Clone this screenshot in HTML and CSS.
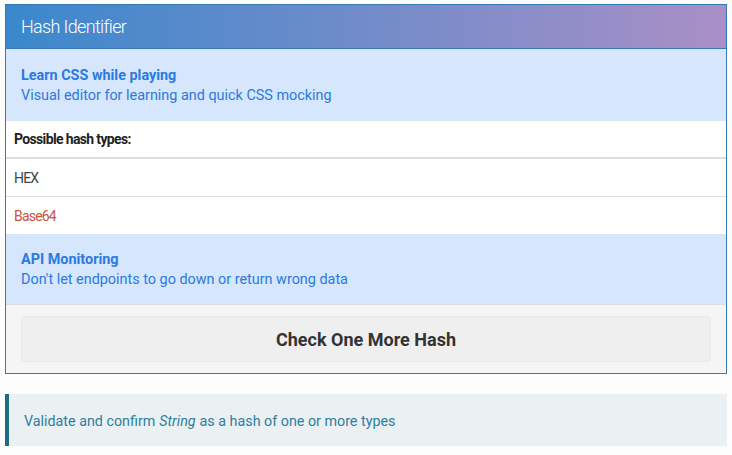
FILE: index.html
```html
<!DOCTYPE html>
<html lang="en">
<head>
<meta charset="utf-8">
<title>Hash Identifier</title>
<link rel="stylesheet" href="styles.css">
</head>
<body>
<div class="panel">
  <div class="panel-heading">Hash Identifier</div>
  <a class="promo" href="#">
    <span class="promo-title">Learn CSS while playing</span>
    <span class="promo-text">Visual editor for learning and quick CSS mocking</span>
  </a>
  <div class="list">
    <div class="list-head">Possible hash types:</div>
    <div class="list-row">HEX</div>
    <div class="list-row list-row-match">Base64</div>
  </div>
  <a class="promo promo-bottom" href="#">
    <span class="promo-title">API Monitoring</span>
    <span class="promo-text">Don't let endpoints to go down or return wrong data</span>
  </a>
  <div class="panel-footer">
    <button class="btn-check" type="button">Check One More Hash</button>
  </div>
</div>
<div class="callout">Validate and confirm <em>String</em> as a hash of one or more types</div>
</body>
</html>
```

FILE: styles.css
```css
html, body {
  margin: 0;
  padding: 0;
  background: #fdfdfd;
}
body {
  padding: 4px 5px 0 5px;
  font-family: Roboto, "Liberation Sans", sans-serif;
  font-size: 14px;
  color: #333;
}
.panel {
  border: 1px solid #337ab7;
  background: #fff;
}
.panel-heading {
  height: 44px;
  box-sizing: border-box;
  padding: 0 15px 1px;
  display: flex;
  align-items: center;
  background: linear-gradient(to right, #3a88cd, #aa8fc6);
  border-bottom: 1px solid #337ab7;
  color: #fff;
  font-size: 18px;
  font-weight: 300;
  letter-spacing: -0.65px;
}
.promo {
  display: flex;
  flex-direction: column;
  justify-content: center;
  height: 72px;
  box-sizing: border-box;
  padding: 1px 15px 0;
  background: #d6e6fc;
  color: #2a7ae2;
  text-decoration: none;
  font-size: 14.4px;
  line-height: 20px;
}
.promo-title {
  font-weight: 700;
}
.promo-bottom {
  height: 71px;
  border-bottom: 1px solid #dcdcdc;
}
.list-head {
  height: 38px;
  box-sizing: border-box;
  padding: 0 8px;
  display: flex;
  align-items: center;
  border-bottom: 2px solid #ddd;
  font-weight: 700;
  font-size: 14px;
  color: #222;
  letter-spacing: -0.65px;
}
.list-row {
  height: 38px;
  box-sizing: border-box;
  padding: 0 8px;
  display: flex;
  align-items: center;
  border-bottom: 1px solid #ddd;
  color: #444;
  letter-spacing: -0.8px;
}
.list-row-match {
  height: 37px;
  border-bottom: 0;
  color: #c9553f;
}
.panel-footer {
  background: #f5f5f5;
  padding: 11px 15px;
}
.btn-check {
  display: block;
  width: 100%;
  height: 46px;
  background: #efefef;
  border: 1px solid #e9e9e9;
  border-radius: 4px;
  font-family: Roboto, "Liberation Sans", sans-serif;
  font-size: 18px;
  font-weight: 700;
  color: #333;
}
.callout {
  margin-top: 20px;
  height: 52px;
  box-sizing: border-box;
  padding: 1px 15px 0;
  display: flex;
  align-items: center;
  border-left: 4px solid #1e6b84;
  background: #ebf0f3;
  color: #2e7ea0;
  font-size: 14.3px;
}
.callout em {
  margin: 0 4px;
}
```
